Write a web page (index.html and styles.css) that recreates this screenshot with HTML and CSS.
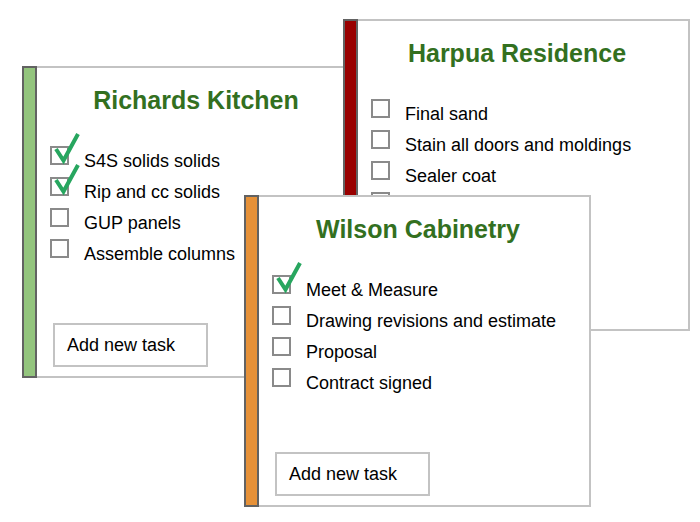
FILE: index.html
```html
<!DOCTYPE html>
<html>
<head>
<meta charset="utf-8">
<link rel="stylesheet" href="styles.css">
</head>
<body>
<div class="canvas">
  <div class="card card-richards">
    <div class="stripe stripe-green"></div>
    <div class="content">
      <h2 class="title">Richards Kitchen</h2>
      <ul class="tasks">
        <li class="task"><span class="box done"><svg class="check" viewBox="0 0 32 32" width="32" height="32"><path d="M4 17 L11.5 28.5 L26 2" /></svg></span><span class="label">S4S solids solids</span></li>
        <li class="task"><span class="box done"><svg class="check" viewBox="0 0 32 32" width="32" height="32"><path d="M4 17 L11.5 28.5 L26 2" /></svg></span><span class="label">Rip and cc solids</span></li>
        <li class="task"><span class="box"></span><span class="label">GUP panels</span></li>
        <li class="task"><span class="box"></span><span class="label">Assemble columns</span></li>
      </ul>
      <button class="add">Add new task</button>
    </div>
  </div>

  <div class="card card-harpua">
    <div class="stripe stripe-red"></div>
    <div class="content">
      <h2 class="title">Harpua Residence</h2>
      <ul class="tasks">
        <li class="task"><span class="box"></span><span class="label">Final sand</span></li>
        <li class="task"><span class="box"></span><span class="label">Stain all doors and moldings</span></li>
        <li class="task"><span class="box"></span><span class="label">Sealer coat</span></li>
        <li class="task"><span class="box"></span></li>
      </ul>
    </div>
  </div>

  <div class="card card-wilson">
    <div class="stripe stripe-orange"></div>
    <div class="content">
      <h2 class="title">Wilson Cabinetry</h2>
      <ul class="tasks">
        <li class="task"><span class="box done"><svg class="check" viewBox="0 0 32 32" width="32" height="32"><path d="M4 17 L11.5 28.5 L26 2" /></svg></span><span class="label">Meet &amp; Measure</span></li>
        <li class="task"><span class="box"></span><span class="label">Drawing revisions and estimate</span></li>
        <li class="task"><span class="box"></span><span class="label">Proposal</span></li>
        <li class="task"><span class="box"></span><span class="label">Contract signed</span></li>
      </ul>
      <button class="add">Add new task</button>
    </div>
  </div>
</div>
</body>
</html>
```
FILE: styles.css
```css
html, body {
  margin: 0;
  padding: 0;
  background: #ffffff;
}

body {
  font-family: "Liberation Sans", Arial, sans-serif;
  color: #000000;
}

.canvas {
  position: relative;
  width: 700px;
  height: 522px;
  overflow: hidden;
}

.card {
  position: absolute;
  width: 347px;
  height: 312px;
  box-sizing: border-box;
  display: flex;
  background: #ffffff;
  border-top: 2px solid #c3c3c3;
  border-right: 2px solid #c3c3c3;
  border-bottom: 2px solid #c3c3c3;
}

.card-richards { left: 22px; top: 66px; z-index: 1; }
.card-harpua { left: 343px; top: 19px; z-index: 2; }
.card-wilson { left: 244px; top: 195px; z-index: 3; }

.stripe {
  width: 11px;
  margin-top: -2px;
  margin-bottom: -2px;
  border: 2px solid #626262;
  flex: none;
}

.stripe-green { background: #93c47d; }
.stripe-red { background: #990000; }
.stripe-orange { background: #e69138; }

.content {
  flex: 1;
  display: flex;
  flex-direction: column;
  padding: 17px 0 9px 0;
}

.title {
  margin: 0;
  font-size: 25px;
  line-height: 30px;
  font-weight: bold;
  color: #33701f;
  text-align: center;
  padding-right: 12px;
}

.tasks {
  list-style: none;
  margin: 31px 0 0 0;
  padding: 0 0 0 13px;
}

.task {
  display: flex;
  align-items: flex-start;
  height: 31px;
  font-size: 18px;
  line-height: 31px;
}

.box {
  position: relative;
  width: 15px;
  height: 15px;
  border: 2px solid #8a8a8a;
  flex: none;
  background: #ffffff;
}

.check {
  position: absolute;
  left: 0px;
  top: -16px;
  overflow: visible;
}

.check path {
  fill: none;
  stroke: #27a65f;
  stroke-width: 4;
  stroke-linejoin: miter;
  stroke-linecap: butt;
}

.label {
  margin-left: 15px;
  white-space: nowrap;
}

.add {
  margin-top: auto;
  margin-left: 16px;
  width: 155px;
  height: 44px;
  box-sizing: border-box;
  border: 2px solid #c3c3c3;
  background: #ffffff;
  font-family: "Liberation Sans", Arial, sans-serif;
  font-size: 18px;
  line-height: 40px;
  text-align: left;
  padding: 0 0 0 12px;
  color: #000000;
}
```
